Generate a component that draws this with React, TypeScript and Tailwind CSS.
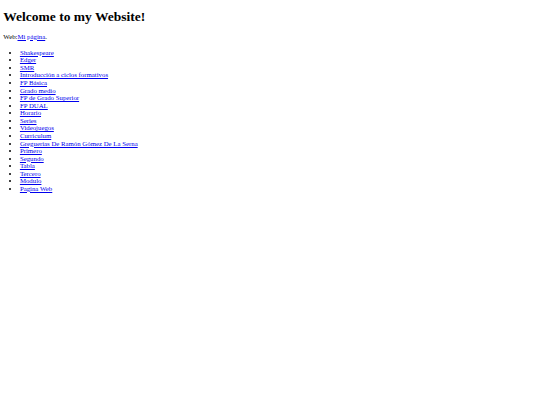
const links = [
  'Shakespeare',
  'Edger',
  'SMR',
  'Introducción a ciclos formativos',
  'FP Básica',
  'Grado medio',
  'FP de Grado Superior',
  'FP DUAL',
  'Horario',
  'Series',
  'Videojuegos',
  'Curriculum',
  'Greguerías De Ramón Gómez De La Serna',
  'Primero',
  'Segundo',
  'Tabla',
  'Tercero',
  'Modulo',
  'Pagina Web',
]

export default function App() {
  return (
    <div className="min-h-[405px] bg-white px-[3.3px] font-['Liberation_Serif','Times_New_Roman',serif] text-black">
      {/* título */}
      <h1 className="mt-[8.6px] mb-[8.8px] text-[13.5px] leading-[15.4px] font-bold">Welcome to my Website!</h1>

      <p className="mt-0 mb-[8.4px] text-[6.8px] leading-[7.6px]">
        Web:<a href="#" className="text-[#0000ee] underline decoration-[0.5px]">Mi página</a>.
      </p>

      {/* enlaces */}
      <ul className="my-[6.6px] list-disc pl-[16.6px] text-[6.8px] leading-[7.56px]">
        {links.map((item) => (
          <li key={item}>
            <a href="#" className="text-[#0000ee] underline decoration-[0.5px]">{item}</a>
          </li>
        ))}
      </ul>
    </div>
  )
}
